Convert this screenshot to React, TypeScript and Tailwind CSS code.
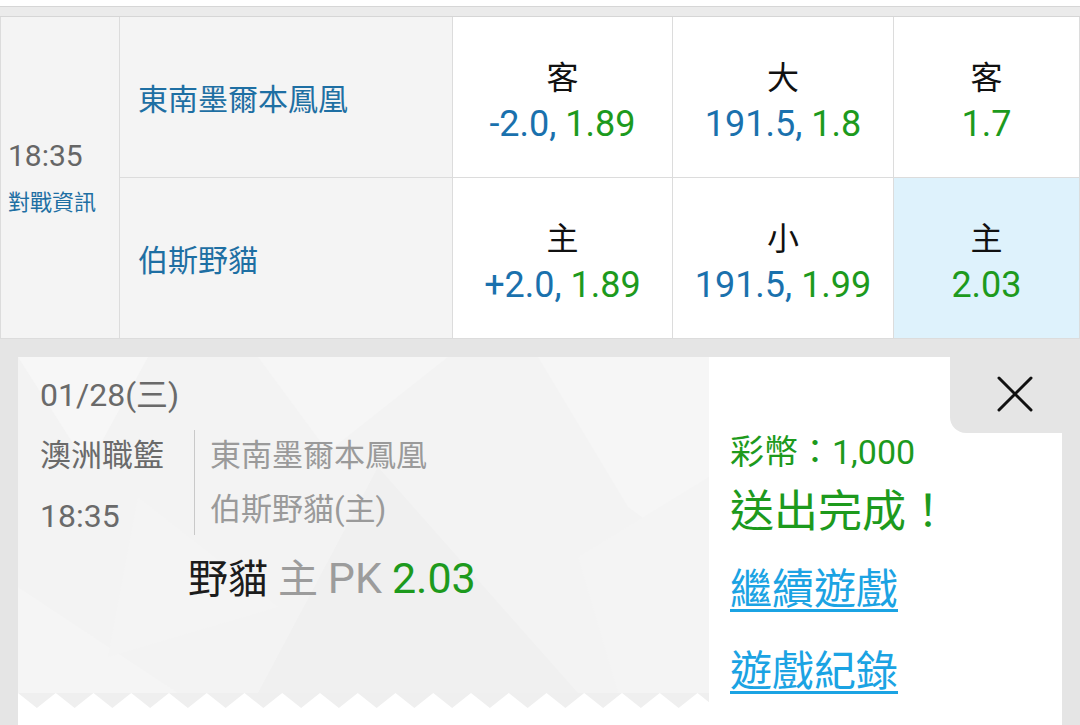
import React from "react";

type Odd = { label: string; line?: string; price: string; active?: boolean };

const rows: { team: string; odds: Odd[] }[] = [
  {
    team: "東南墨爾本鳳凰",
    odds: [
      { label: "客", line: "-2.0,", price: "1.89" },
      { label: "大", line: "191.5,", price: "1.8" },
      { label: "客", price: "1.7" },
    ],
  },
  {
    team: "伯斯野貓",
    odds: [
      { label: "主", line: "+2.0,", price: "1.89" },
      { label: "小", line: "191.5,", price: "1.99" },
      { label: "主", price: "2.03", active: true },
    ],
  },
];

const cellWidths = ["w-[220px]", "w-[221px]", "flex-1"];

function Zigzag() {
  const w = 691;
  const step = 37.75;
  const pts: string[] = ["0,0"];
  for (let x = 0; x < w; x += step) {
    pts.push(`${x + step / 2},15`);
    pts.push(`${Math.min(x + step, w)},0`);
  }
  return (
    <svg width={w} height={15} viewBox={`0 0 ${w} 15`} className="block">
      <polygon points={pts.join(" ")} fill="#efefef" />
    </svg>
  );
}

// faint low-poly background of the ticket
function TicketPattern() {
  return (
    <svg
      className="absolute inset-0"
      width="691"
      height="336"
      viewBox="0 0 691 336"
    >
      <polygon points="0,0 130,0 70,110" fill="#f7f7f7" />
      <polygon points="240,0 430,0 310,95" fill="#f6f6f6" />
      <polygon points="520,0 691,0 691,210 610,150" fill="#f6f6f6" />
      <polygon points="0,230 160,336 0,336" fill="#f5f5f5" />
      <polygon points="360,110 560,336 240,336" fill="#f0f0f0" />
      <polygon points="560,200 691,120 691,336 600,336" fill="#f4f4f4" />
      <polygon points="120,140 260,250 90,300" fill="#f4f4f4" />
    </svg>
  );
}

export default function App() {
  return (
    <div className="w-[1080px] h-[725px] overflow-hidden bg-[#e5e5e5] font-[family-name:Roboto,'Noto_Sans_CJK_TC',sans-serif]">
      <div className="h-[6px] bg-white" />
      <div className="h-[11px] bg-[#ebebeb] border-y border-[#d6d6d6]" />

      {/* odds table */}
      <div className="flex h-[322px] bg-white border-l border-r border-b border-[#dcdcdc]">
        <div className="w-[119px] shrink-0 bg-[#f4f4f4] border-r border-[#dcdcdc] flex flex-col pl-[7px] pt-[121px]">
          <div className="text-[30px] leading-[36px] text-[#666666]">18:35</div>
          <div className="mt-[14px] text-[22px] leading-[30px] text-[#1e6fa3]">
            對戰資訊
          </div>
        </div>
        <div className="flex-1 flex flex-col">
          {rows.map((row, ri) => (
            <div
              key={row.team}
              className={`flex ${ri === 0 ? "h-[161px] border-b border-[#dcdcdc]" : "flex-1"}`}
            >
              <div className="w-[333px] shrink-0 bg-[#f4f4f4] border-r border-[#dcdcdc] flex items-center pl-[18px] pt-[4px]">
                <span className="text-[30px] text-[#1e6fa3]">{row.team}</span>
              </div>
              {row.odds.map((o, i) => (
                <div
                  key={i}
                  className={`${cellWidths[i]} ${i < 2 ? "border-r border-[#dcdcdc]" : ""} ${o.active ? "bg-[#def2fc]" : "bg-white"} flex flex-col items-center pt-[41px]`}
                >
                  <div className="text-[32px] leading-[40px] text-[#111111]">
                    {o.label}
                  </div>
                  <div className="mt-[4px] text-[36px] leading-[44px]">
                    {o.line && (
                      <span className="text-[#1a71ad]">{o.line} </span>
                    )}
                    <span className="text-[#1d9a1d]">{o.price}</span>
                  </div>
                </div>
              ))}
            </div>
          ))}
        </div>
      </div>

      {/* bet slip */}
      <div className="pt-[18px] px-[18px]">
        <div className="flex h-[400px] bg-white">
          <div className="w-[691px] shrink-0 flex flex-col">
            <div className="relative h-[336px] bg-[#f3f3f3] overflow-hidden">
              <TicketPattern />
              <div className="relative pl-[22px] pt-[18px]">
                <div className="text-[32px] leading-[40px] text-[#6a6a6a]">
                  01/28(三)
                </div>
                <div className="flex mt-[15px]">
                  <div className="w-[154px] text-[31px] text-[#6a6a6a]">
                    <div className="leading-[52px]">澳洲職籃</div>
                    <div className="leading-[52px] mt-[8px] text-[32px]">18:35</div>
                  </div>
                  <div className="w-px h-[105px] bg-[#c9c9c9]" />
                  <div className="pl-[15px] text-[31px] text-[#9a9a9a]">
                    <div className="leading-[52px]">東南墨爾本鳳凰</div>
                    <div className="leading-[52px] mt-[2px]">伯斯野貓(主)</div>
                  </div>
                </div>
                <div className="ml-[148px] mt-[11px] text-[40px] leading-[50px]">
                  <span className="text-[#1c1c1c]">野貓</span>{" "}
                  <span className="text-[#9c9c9c]">
                    主 <span className="text-[43px]">PK</span>
                  </span>{" "}
                  <span className="text-[43px] text-[#1d9a1d]">2.03</span>
                </div>
              </div>
            </div>
            <Zigzag />
          </div>

          <div className="flex-1 flex flex-col">
            <div className="flex justify-end">
              <button className="w-[112px] h-[76px] bg-[#e5e5e5] rounded-bl-[16px] flex items-center pl-[47px] pb-[2px]">
                <svg width="36" height="36" viewBox="0 0 36 36">
                  <path
                    d="M2 2 L34 34 M34 2 L2 34"
                    stroke="#111111"
                    strokeWidth="3"
                    strokeLinecap="round"
                  />
                </svg>
              </button>
            </div>
            <div className="pl-[21px] text-[#1d9a1d]">
              <div className="text-[34px] leading-[38px]">彩幣：1,000</div>
              <div className="mt-[16px] text-[44px] leading-[50px]">
                送出完成！
              </div>
            </div>
            <div className="pl-[21px] text-[42px] leading-[50px] text-[#1ba3e3]">
              <div className="mt-[28px]">
                <a className="underline decoration-[3px] underline-offset-[5px]">
                  繼續遊戲
                </a>
              </div>
              <div className="mt-[32px]">
                <a className="underline decoration-[3px] underline-offset-[5px]">
                  遊戲紀錄
                </a>
              </div>
            </div>
          </div>
        </div>
      </div>
    </div>
  );
}
